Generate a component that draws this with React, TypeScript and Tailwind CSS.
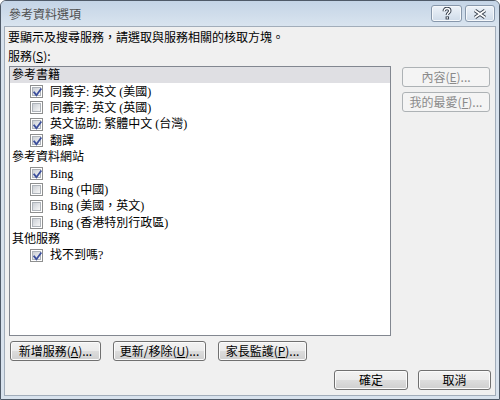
import clsx from "clsx";
import type { ReactNode } from "react";

const ui = "font-['Noto_Sans_CJK_TC','Noto_Sans',sans-serif]";
const listFont = "font-['Liberation_Serif','Noto_Sans_CJK_TC',serif]";

type Row = { label: string; cat?: boolean; on?: boolean; hl?: boolean };

const rows: Row[] = [
  { label: "參考書籍", cat: true, hl: true },
  { label: "同義字: 英文 (美國)", on: true },
  { label: "同義字: 英文 (英國)", on: false },
  { label: "英文協助: 繁體中文 (台灣)", on: true },
  { label: "翻譯", on: true },
  { label: "參考資料網站", cat: true },
  { label: "Bing", on: true },
  { label: "Bing (中國)", on: false },
  { label: "Bing (美國，英文)", on: false },
  { label: "Bing (香港特別行政區)", on: false },
  { label: "其他服務", cat: true },
  { label: "找不到嗎?", on: true },
];

function Check({ on }: { on?: boolean }) {
  return (
    <span className="relative flex h-[13px] w-[13px] shrink-0 items-center justify-center border border-[#8e8f8f] bg-white">
      <span className="h-[9px] w-[9px] border border-[#aeb3b9] bg-gradient-to-br from-[#cbcfd5] to-[#f7f7f7]" />
      {on && (
        <svg className="absolute left-[1px] top-[1px]" width="11" height="11" viewBox="0 0 11 11">
          <path d="M2.2 5.4 L4.4 8.2 L8.8 2.2" fill="none" stroke="#3c4f9c" strokeWidth="1.8" strokeLinecap="square" />
        </svg>
      )}
    </span>
  );
}

function Btn({ children, className, disabled }: { children: ReactNode; className?: string; disabled?: boolean }) {
  return (
    <div
      className={clsx(
        "flex h-[20px] shrink-0 items-center justify-center rounded-[3px] border text-[12px] leading-none",
        disabled
          ? "border-[#adb2b5] bg-[#f4f4f4] text-[#8a8a8a]"
          : "border-[#707070] bg-[linear-gradient(#f2f2f2_0%,#ebebeb_50%,#dddddd_50%,#cfcfcf_100%)] text-black shadow-[inset_0_0_0_1px_#fbfbfb]",
        className,
      )}
    >
      {children}
    </div>
  );
}

function CaptionBtn({ children, w }: { children: ReactNode; w: string }) {
  return (
    <div className={clsx("flex h-[17px] items-center justify-center rounded-[3px] border border-[#8797ab] bg-gradient-to-b from-[#eef3f9] to-[#cfdbe9] shadow-[inset_0_0_0_1px_#f5f8fb]", w)}>
      {children}
    </div>
  );
}

export default function App() {
  return (
    <div className={clsx("flex h-[400px] w-[500px] flex-col overflow-hidden rounded-t-[6px] border border-[#4f5a68] bg-[#d8e2ed] text-black", ui)}>
      {/* caption bar */}
      <div className="flex h-[25px] shrink-0 items-center justify-between bg-gradient-to-b from-[#c4d4e6] to-[#d9e4ef] pl-[8px] pr-[4px]">
        <span className="text-[12px] leading-none text-[#4f4f4f]">參考資料選項</span>
        <div className="flex gap-[3px]">
          <CaptionBtn w="w-[31px]">
            <svg width="12" height="13" viewBox="0 0 12 13">
              <path d="M3.2 4.2 C3.2 2.4 4.4 1.5 6 1.5 C7.7 1.5 8.8 2.5 8.8 3.9 C8.8 5.6 6.3 5.9 6.3 8" fill="none" stroke="#3a4350" strokeWidth="3.4" />
              <rect x="4.6" y="9.4" width="3.4" height="3" fill="#3a4350" />
              <path d="M3.2 4.2 C3.2 2.4 4.4 1.5 6 1.5 C7.7 1.5 8.8 2.5 8.8 3.9 C8.8 5.6 6.3 5.9 6.3 8" fill="none" stroke="#ffffff" strokeWidth="1.4" />
              <rect x="5.6" y="10.2" width="1.4" height="1.4" fill="#ffffff" />
            </svg>
          </CaptionBtn>
          <CaptionBtn w="w-[30px]">
            <svg width="14" height="10" viewBox="0 0 14 10">
              <path d="M2 1.5 L12 8.5 M12 1.5 L2 8.5" stroke="#3a4350" strokeWidth="3.6" />
              <path d="M2 1.5 L12 8.5 M12 1.5 L2 8.5" stroke="#ffffff" strokeWidth="1.6" />
            </svg>
          </CaptionBtn>
        </div>
      </div>

      {/* dialog body */}
      <div className="mx-[3px] mb-[3px] flex flex-1 flex-col border border-[#a2adba] bg-[#f0f0f0] px-[3px] pt-[2px] text-[12px] leading-[16px]">
        <p>要顯示及搜尋服務，請選取與服務相關的核取方塊。</p>
        <p className="mt-[3px]">
          服務(<span className="underline">S</span>):
        </p>

        <div className="mt-[2px] flex">
          <div className={clsx("ml-px h-[270px] w-[382px] border border-[#828790] bg-white", listFont)}>
            {rows.map((r) =>
              r.cat ? (
                <div key={r.label} className={clsx("flex h-[16.4px] items-center pl-[2px]", r.hl && "bg-[#dfdfe3]")}>
                  {r.label}
                </div>
              ) : (
                <div key={r.label} className="flex h-[16.4px] items-center gap-[7px] pl-[20px]">
                  <Check on={r.on} />
                  <span>{r.label}</span>
                </div>
              ),
            )}
          </div>

          <div className="ml-[11px] mt-px flex flex-col gap-[5px]">
            <Btn disabled className="w-[88px]">
              內容(<span className="underline">E</span>)...
            </Btn>
            <Btn disabled className="w-[88px]">
              我的最愛(<span className="underline">F</span>)...
            </Btn>
          </div>
        </div>

        <div className="ml-[2px] mt-[5px] flex gap-[12px]">
          <Btn className="w-[91px]">
            新增服務(<span className="underline">A</span>)...
          </Btn>
          <Btn className="w-[93px]">
            更新/移除(<span className="underline">U</span>)...
          </Btn>
          <Btn className="w-[89px]">
            家長監護(<span className="underline">P</span>)...
          </Btn>
        </div>

        <div className="mt-[9px] flex justify-end gap-[10px] pr-[1px]">
          <Btn className="w-[74px]">確定</Btn>
          <Btn className="w-[73px]">取消</Btn>
        </div>
      </div>
    </div>
  );
}
